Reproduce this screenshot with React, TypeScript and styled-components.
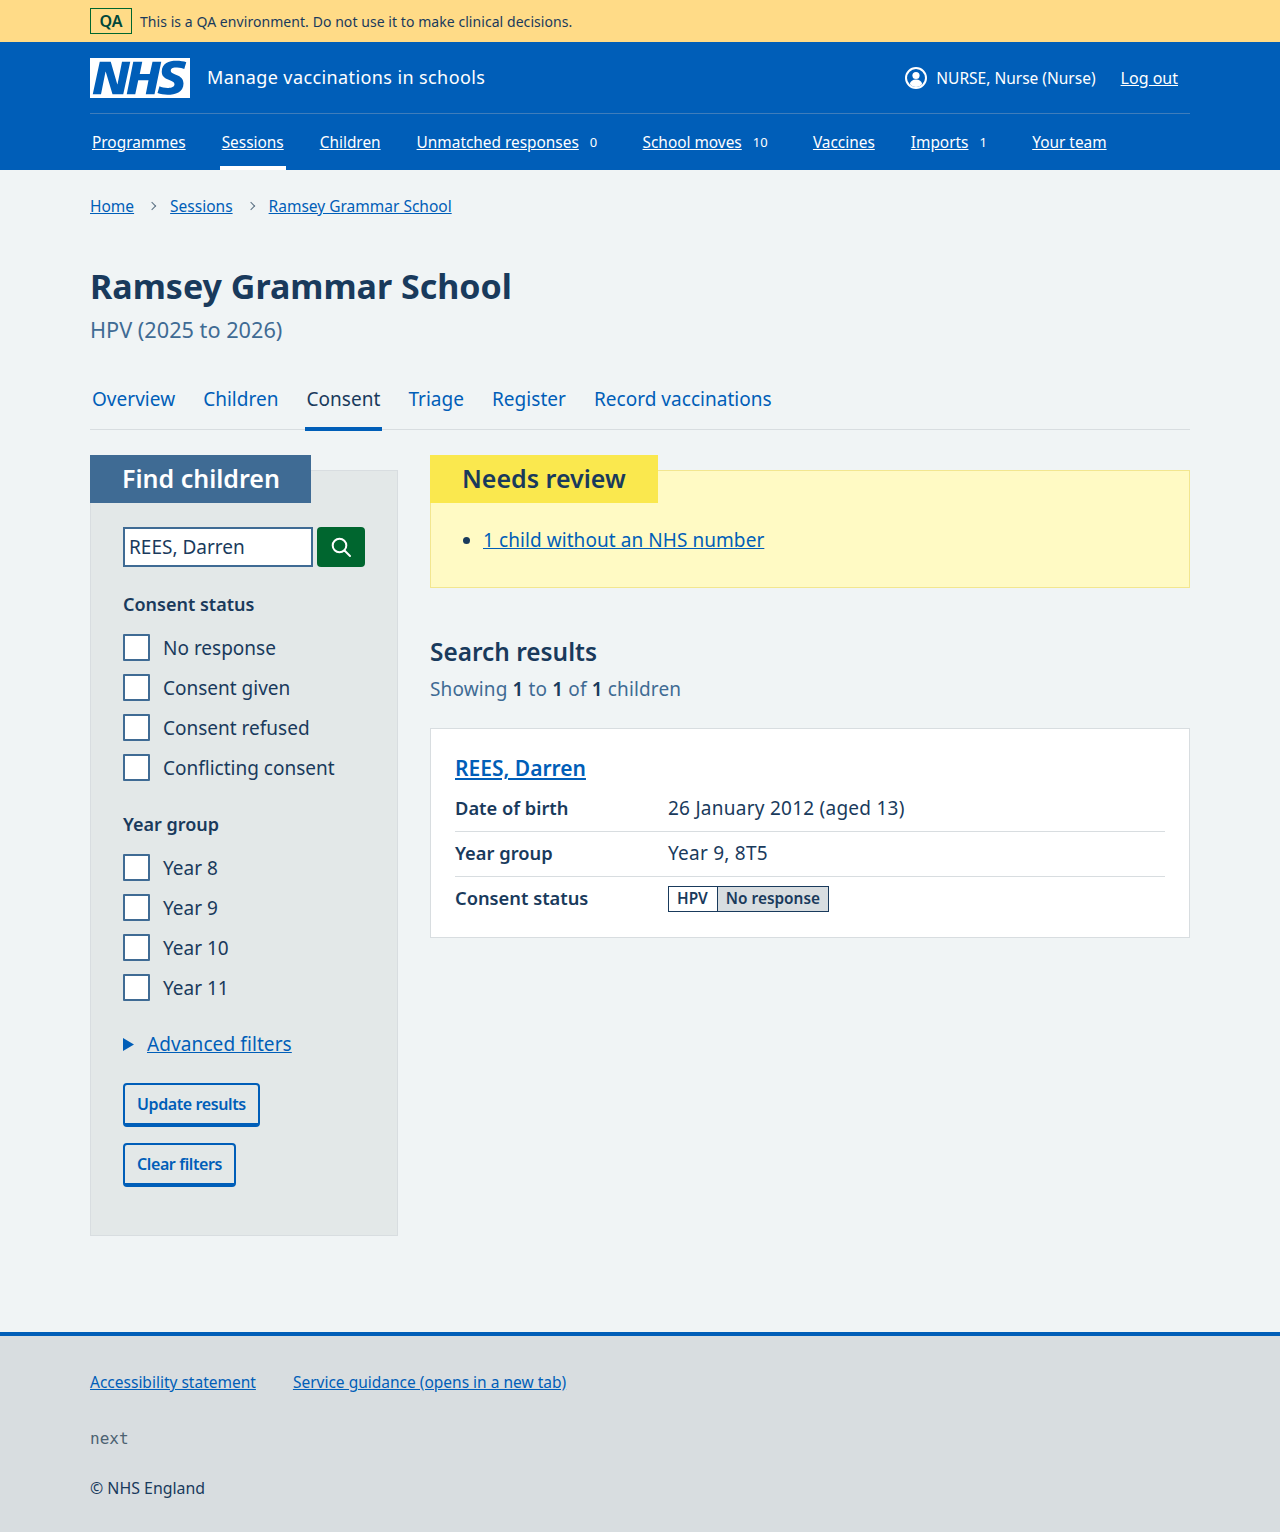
import React from 'react';
import styled, {createGlobalStyle} from "styled-components";

const colors = {
    blue: '#005eb8',
    text: '#193a5c',
    secondary: '#3f6b94',
    page: '#f0f4f5',
    panel: '#e3e8e8',
    border: '#d8dde0',
    green: '#00662f',
};

const navItems = [
    {label: 'Programmes'},
    {label: 'Sessions', active: true},
    {label: 'Children'},
    {label: 'Unmatched responses', count: '0'},
    {label: 'School moves', count: '10'},
    {label: 'Vaccines'},
    {label: 'Imports', count: '1'},
    {label: 'Your team'},
];

const tabs = ['Overview', 'Children', 'Consent', 'Triage', 'Register', 'Record vaccinations'];
const consentOptions = ['No response', 'Consent given', 'Consent refused', 'Conflicting consent'];
const yearOptions = ['Year 8', 'Year 9', 'Year 10', 'Year 11'];

const App = () => {
    return (
        <>
            <GlobalStyle/>
            <QaBanner>
                <Container>
                    <QaRow>
                        <QaTag>QA</QaTag>
                        <span>This is a QA environment. Do not use it to make clinical decisions.</span>
                    </QaRow>
                </Container>
            </QaBanner>
            <Header>
                <Container>
                    <HeaderTop>
                        <Brand>
                            <Logo viewBox="0 0 40 16" role="img" aria-label="NHS">
                                <path fill="#fff" d="M0 0h40v16H0z"/>
                                <path fill={colors.blue} d="M3.9 1.5h4.4l2.6 9h.1l1.8-9h3.3l-2.8 13H9l-2.7-9h-.1l-1.8 9H1.1M17.3 1.5h3.6l-1 4.9h4L25 1.5h3.5l-2.7 13h-3.5l1.1-5.6h-4.1l-1.2 5.6h-3.4M37.7 4.4c-.7-.3-1.6-.6-2.9-.6-1.4 0-2.5.2-2.5 1.3 0 1.8 5.1 1.2 5.1 5.1 0 3.6-3.3 4.5-6.4 4.5-1.3 0-2.9-.3-4-.7l.8-2.7c.7.4 2.1.7 3.2.7s2.8-.2 2.8-1.5c0-2.1-5.1-1.3-5.1-5 0-3.4 2.9-4.4 5.8-4.4 1.6 0 3.1.2 4 .6"/>
                            </Logo>
                            <ServiceName>Manage vaccinations in schools</ServiceName>
                        </Brand>
                        <Account>
                            <UserIcon viewBox="0 0 22 22">
                                <circle cx="11" cy="11" r="10" fill="none" stroke="#fff" strokeWidth="2"/>
                                <circle cx="11" cy="8.5" r="3.6" fill="#fff"/>
                                <path fill="#fff" d="M4.8 17c.6-3 3-4.6 6.2-4.6s5.600 1.600 6.200 4.600c-1.500 1.700-3.800 3-6.200 3s-4.700-1.300-6.200-3z"/>
                            </UserIcon>
                            <AccountName>NURSE, Nurse (Nurse)</AccountName>
                            <LogOut href="#">Log out</LogOut>
                        </Account>
                    </HeaderTop>
                    <Nav>
                        {navItems.map(item => (
                            <NavItem key={item.label} $active={item.active}>
                                <NavLink href="#">{item.label}</NavLink>
                                {item.count && <NavCount>{item.count}</NavCount>}
                            </NavItem>
                        ))}
                    </Nav>
                </Container>
            </Header>
            <Main>
                <Container>
                    <Breadcrumbs>
                        <CrumbLink href="#">Home</CrumbLink>
                        <Chevron/>
                        <CrumbLink href="#">Sessions</CrumbLink>
                        <Chevron/>
                        <CrumbLink href="#">Ramsey Grammar School</CrumbLink>
                    </Breadcrumbs>
                    <Title>Ramsey Grammar School</Title>
                    <Caption>HPV (2025 to 2026)</Caption>
                    <TabList>
                        {tabs.map(tab => (
                            <Tab key={tab} href="#" $active={tab === 'Consent'}>{tab}</Tab>
                        ))}
                    </TabList>
                    <Columns>
                        <FilterPanel>
                            <FilterHeading>Find children</FilterHeading>
                            <SearchRow>
                                <SearchInput readOnly value="REES, Darren"/>
                                <SearchButton aria-label="Search">
                                    <svg width="24" height="24" viewBox="0 0 24 24" fill="none" stroke="#fff" strokeWidth="2" strokeLinecap="round">
                                        <circle cx="10.500" cy="10.500" r="6.800"/>
                                        <path d="M15.500 15.500l5.500 5.500"/>
                                    </svg>
                                </SearchButton>
                            </SearchRow>
                            <Legend>Consent status</Legend>
                            <Options>
                                {consentOptions.map(o => (
                                    <Option key={o}><Box/>{o}</Option>
                                ))}
                            </Options>
                            <Legend $gap={22}>Year group</Legend>
                            <Options>
                                {yearOptions.map(o => (
                                    <Option key={o}><Box/>{o}</Option>
                                ))}
                            </Options>
                            <Advanced>
                                <svg width="11" height="13" viewBox="0 0 11 13"><path fill={colors.blue} d="M0 0l11 6.500L0 13z"/></svg>
                                <AdvancedLink href="#">Advanced filters</AdvancedLink>
                            </Advanced>
                            <SecondaryButton>Update results</SecondaryButton>
                            <SecondaryButton>Clear filters</SecondaryButton>
                        </FilterPanel>
                        <Results>
                            <ReviewCard>
                                <ReviewHeading>Needs review</ReviewHeading>
                                <ReviewList>
                                    <li><ReviewLink href="#">1 child without an NHS number</ReviewLink></li>
                                </ReviewList>
                            </ReviewCard>
                            <ResultsTitle>Search results</ResultsTitle>
                            <ResultsCount>Showing <b>1</b> to <b>1</b> of <b>1</b> children</ResultsCount>
                            <ChildCard>
                                <ChildName href="#">REES, Darren</ChildName>
                                <Row>
                                    <RowKey>Date of birth</RowKey>
                                    <RowValue>26 January 2012 (aged 13)</RowValue>
                                </Row>
                                <Row>
                                    <RowKey>Year group</RowKey>
                                    <RowValue>Year 9, 8T5</RowValue>
                                </Row>
                                <Row $last>
                                    <RowKey>Consent status</RowKey>
                                    <Status>
                                        <StatusProgramme>HPV</StatusProgramme>
                                        <StatusValue>No response</StatusValue>
                                    </Status>
                                </Row>
                            </ChildCard>
                        </Results>
                    </Columns>
                </Container>
            </Main>
            <Footer>
                <Container>
                    <FooterLinks>
                        <FooterLink href="#">Accessibility statement</FooterLink>
                        <FooterLink href="#">Service guidance (opens in a new tab)</FooterLink>
                    </FooterLinks>
                    <Version>next</Version>
                    <Copyright>© NHS England</Copyright>
                </Container>
            </Footer>
        </>
    );
};

export default App;

const GlobalStyle = createGlobalStyle`
    * {
        box-sizing: border-box;
    }

    body {
        margin: 0;
        background: ${colors.page};
        color: ${colors.text};
        font-family: 'Noto Sans', sans-serif;
        font-size: 19px;
    }

    a {
        color: ${colors.blue};
    }
`

const Container = styled.div`
    width: 1100px;
    margin: 0 auto;
`

const QaBanner = styled.div`
    height: 42px;
    background: #ffdb87;
    font-size: 14px;
    letter-spacing: 0.06px;
`

const QaRow = styled.div`
    display: flex;
    align-items: center;
    gap: 8px;
    height: 42px;
`

const QaTag = styled.strong`
    width: 42px;
    height: 26px;
    border: 1px solid ${colors.green};
    display: flex;
    align-items: center;
    justify-content: center;
    font-size: 16px;
    font-weight: 600;
    color: #00473a;
`

const Header = styled.header`
    background: ${colors.blue};
    height: 128px;
    color: #fff;

    a {
        color: #fff;
    }
`

const HeaderTop = styled.div`
    height: 72px;
    padding-top: 16px;
    padding-right: 12px;
    display: flex;
    justify-content: space-between;
    border-bottom: 1px solid #3f7dbb;
`

const Brand = styled.div`
    display: flex;
    align-items: center;
    gap: 17px;
    height: 40px;
`

const Logo = styled.svg`
    width: 100px;
    height: 40px;
    display: block;
`

const ServiceName = styled.span`
    font-size: 18px;
    letter-spacing: 0.4px;
    position: relative;
    top: -1px;
`

const Account = styled.div`
    display: flex;
    align-items: center;
    height: 40px;
    font-size: 15.5px;
`

const UserIcon = styled.svg`
    width: 22px;
    height: 22px;
    margin-right: 9px;
`

const AccountName = styled.span`
    margin-right: 25px;
`

const LogOut = styled.a`
    font-size: 16px;
`

const Nav = styled.nav`
    display: flex;
    gap: 32px;
    height: 56px;
`

const NavItem = styled.div<{ $active?: boolean }>`
    display: flex;
    align-items: center;
    padding: 4px 2px 0;
    height: 56px;
    font-size: 15.4px;
    border-bottom: 4px solid ${props => props.$active ? '#fff' : 'transparent'};
`

const NavLink = styled.a``

const NavCount = styled.span`
    margin-left: 3px;
    padding: 0 9.3px 0 8px;
    font-size: 13px;
`

const Main = styled.main`
    height: 1162px;
`

const Breadcrumbs = styled.div`
    display: flex;
    align-items: center;
    height: 72px;
    font-size: 15.5px;
`

const CrumbLink = styled.a``

const Chevron = styled.span`
    width: 6px;
    height: 6px;
    margin: 0 15px;
    border-top: 1.5px solid #5a7083;
    border-right: 1.5px solid #5a7083;
    transform: rotate(45deg);
`

const Title = styled.h1`
    margin: 23px 0 0;
    font-size: 34px;
    line-height: 42px;
    font-weight: 700;
`

const Caption = styled.div`
    margin-top: 8px;
    font-size: 21.7px;
    line-height: 30px;
    color: ${colors.secondary};
`

const TabList = styled.div`
    display: flex;
    gap: 24px;
    margin-top: 27px;
    height: 58px;
    border-bottom: 1px solid ${colors.border};
`

const Tab = styled.a<{ $active?: boolean }>`
    height: 59px;
    padding: 13px 2px 0;
    font-size: 19px;
    line-height: 28px;
    letter-spacing: 0.03px;
    text-decoration: none;
    color: ${props => props.$active ? colors.text : colors.blue};
    border-bottom: 4px solid ${props => props.$active ? colors.blue : 'transparent'};
`

const Columns = styled.div`
    display: flex;
    gap: 32px;
    align-items: flex-start;
    margin-top: 40px;
`

const FilterPanel = styled.form`
    position: relative;
    width: 308px;
    padding: 56px 32px 48px 32px;
    background: ${colors.panel};
    border: 1px solid ${colors.border};
`

const FilterHeading = styled.h2`
    position: absolute;
    left: -1px;
    top: -16px;
    width: 221px;
    height: 48px;
    margin: 0;
    padding-left: 32px;
    background: ${colors.secondary};
    color: #fff;
    font-size: 25px;
    line-height: 46px;
    font-weight: 600;
`

const SearchRow = styled.div`
    display: flex;
    gap: 4px;
`

const SearchInput = styled.input`
    width: 190px;
    height: 40px;
    padding: 0 4px;
    border: 2px solid ${colors.secondary};
    background: #fff;
    color: ${colors.text};
    font-family: inherit;
    font-size: 19px;
    outline: none;
`

const SearchButton = styled.button`
    width: 48px;
    height: 40px;
    padding: 0;
    border: 0;
    border-radius: 4px;
    background: ${colors.green};
    display: flex;
    align-items: center;
    justify-content: center;
`

const Legend = styled.div<{ $gap?: number }>`
    margin-top: ${props => props.$gap ?? 23}px;
    font-size: 18px;
    line-height: 28px;
    font-weight: 600;
`

const Options = styled.div`
    margin-top: 10px;
    display: flex;
    flex-direction: column;
`

const Option = styled.label`
    display: flex;
    align-items: center;
    gap: 13px;
    height: 40px;
    font-size: 19px;
`

const Box = styled.span`
    width: 27px;
    height: 27px;
    margin-bottom: 2px;
    background: #fff;
    border: 2px solid ${colors.secondary};
    border-radius: 1px;
`

const Advanced = styled.div`
    display: flex;
    align-items: center;
    gap: 13px;
    margin-top: 20px;
    height: 32px;
    font-size: 19px;
    letter-spacing: 0.1px;
`

const AdvancedLink = styled.a``

const SecondaryButton = styled.button`
    display: block;
    height: 44px;
    margin-top: 23px;
    padding: 0 12px;
    background: transparent;
    border: 2px solid ${colors.blue};
    border-bottom-width: 4px;
    border-radius: 4px;
    color: ${colors.blue};
    font-family: inherit;
    font-size: 16px;
    letter-spacing: -0.4px;
    font-weight: 600;

    & + & {
        margin-top: 16px;
    }
`

const Results = styled.div`
    width: 760px;
`

const ReviewCard = styled.div`
    position: relative;
    height: 118px;
    padding-top: 55px;
    background: #fffac4;
    border: 1px solid #f2e68f;
`

const ReviewHeading = styled.h2`
    position: absolute;
    left: -1px;
    top: -16px;
    margin: 0;
    width: 228px;
    height: 48px;
    padding-left: 32px;
    background: #fae84e;
    font-size: 25px;
    line-height: 46px;
    font-weight: 600;
`

const ReviewList = styled.ul`
    margin: 0;
    padding-left: 52px;
    font-size: 19px;
    line-height: 28px;
    letter-spacing: 0.07px;
`

const ReviewLink = styled.a``

const ResultsTitle = styled.h2`
    margin: 47px 0 0;
    font-size: 24.4px;
    line-height: 34px;
    font-weight: 600;
`

const ResultsCount = styled.p`
    margin: 6px 0 0;
    font-size: 19px;
    line-height: 28px;
    letter-spacing: 0.13px;
    color: ${colors.secondary};

    b {
        color: ${colors.text};
        font-weight: 600;
    }
`

const ChildCard = styled.div`
    margin-top: 25px;
    height: 210px;
    padding: 24px 24px 0;
    background: #fff;
    border: 1px solid ${colors.border};
`

const ChildName = styled.a`
    display: block;
    margin-bottom: 4px;
    font-size: 21px;
    line-height: 30px;
    font-weight: 600;
`

const Row = styled.div<{ $last?: boolean }>`
    display: flex;
    align-items: center;
    height: 45px;
    padding-bottom: 2px;
    font-size: 18.3px;
    border-bottom: ${props => props.$last ? 'none' : `1px solid ${colors.border}`};
`

const RowKey = styled.span`
    width: 213px;
    margin-bottom: 2px;
    font-weight: 600;
`

const RowValue = styled.span`
    font-size: 19px;
    letter-spacing: 0.25px;
`

const Status = styled.span`
    display: flex;
    height: 26px;
    border: 1px solid ${colors.text};
    font-size: 15.4px;
    line-height: 24px;
    font-weight: 600;
`

const StatusProgramme = styled.span`
    padding: 0 9px 0 8px;
    border-right: 1px solid ${colors.text};
`

const StatusValue = styled.span`
    padding: 0 8px;
    background: ${colors.border};
`

const Footer = styled.footer`
    height: 200px;
    padding-top: 32px;
    background: ${colors.border};
    border-top: 4px solid ${colors.blue};
`

const FooterLinks = styled.div`
    display: flex;
    gap: 37px;
    font-size: 15.5px;
    line-height: 28px;
`

const FooterLink = styled.a``

const Version = styled.div`
    margin-top: 29px;
    font-family: 'DejaVu Sans Mono', monospace;
    font-size: 16px;
    line-height: 28px;
    color: #4c6272;
`

const Copyright = styled.div`
    margin-top: 21px;
    font-size: 15.9px;
    line-height: 28px;
`
